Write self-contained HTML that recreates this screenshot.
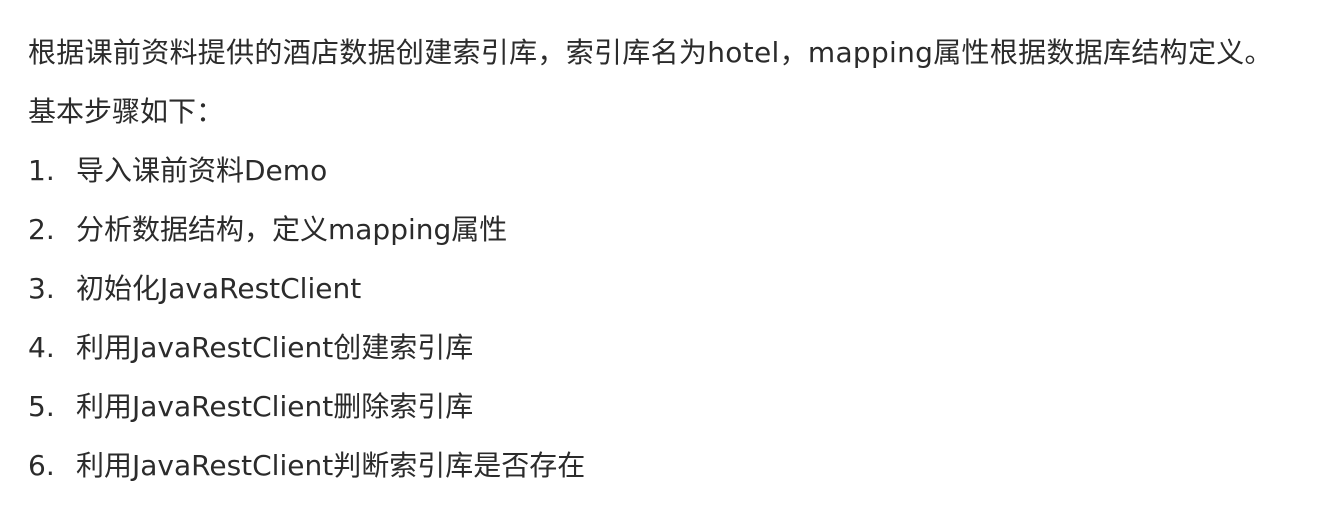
<html><head><style>
body{margin:0;width:1322px;height:527px;background:#fff;overflow:hidden;font-family:"DejaVu Sans","Noto Sans CJK SC",sans-serif;color:#2b2b2b;font-size:28px}
.l{position:absolute;left:28px;white-space:nowrap;line-height:36px}
.n{display:inline-block;width:48px}
.f{letter-spacing:0.3px}
</style></head><body>
<div class="l f" style="top:35px">根据课前资料提供的酒店数据创建索引库，索引库名为hotel，mapping属性根据数据库结构定义。</div>
<div class="l" style="top:94px">基本步骤如下：</div>
<div class="l" style="top:153px"><span class="n">1.</span>导入课前资料Demo</div>
<div class="l" style="top:212px"><span class="n">2.</span>分析数据结构，定义mapping属性</div>
<div class="l" style="top:271px"><span class="n">3.</span>初始化JavaRestClient</div>
<div class="l" style="top:330px"><span class="n">4.</span>利用JavaRestClient创建索引库</div>
<div class="l" style="top:389px"><span class="n">5.</span>利用JavaRestClient删除索引库</div>
<div class="l" style="top:448px"><span class="n">6.</span>利用JavaRestClient判断索引库是否存在</div>
</body></html>
